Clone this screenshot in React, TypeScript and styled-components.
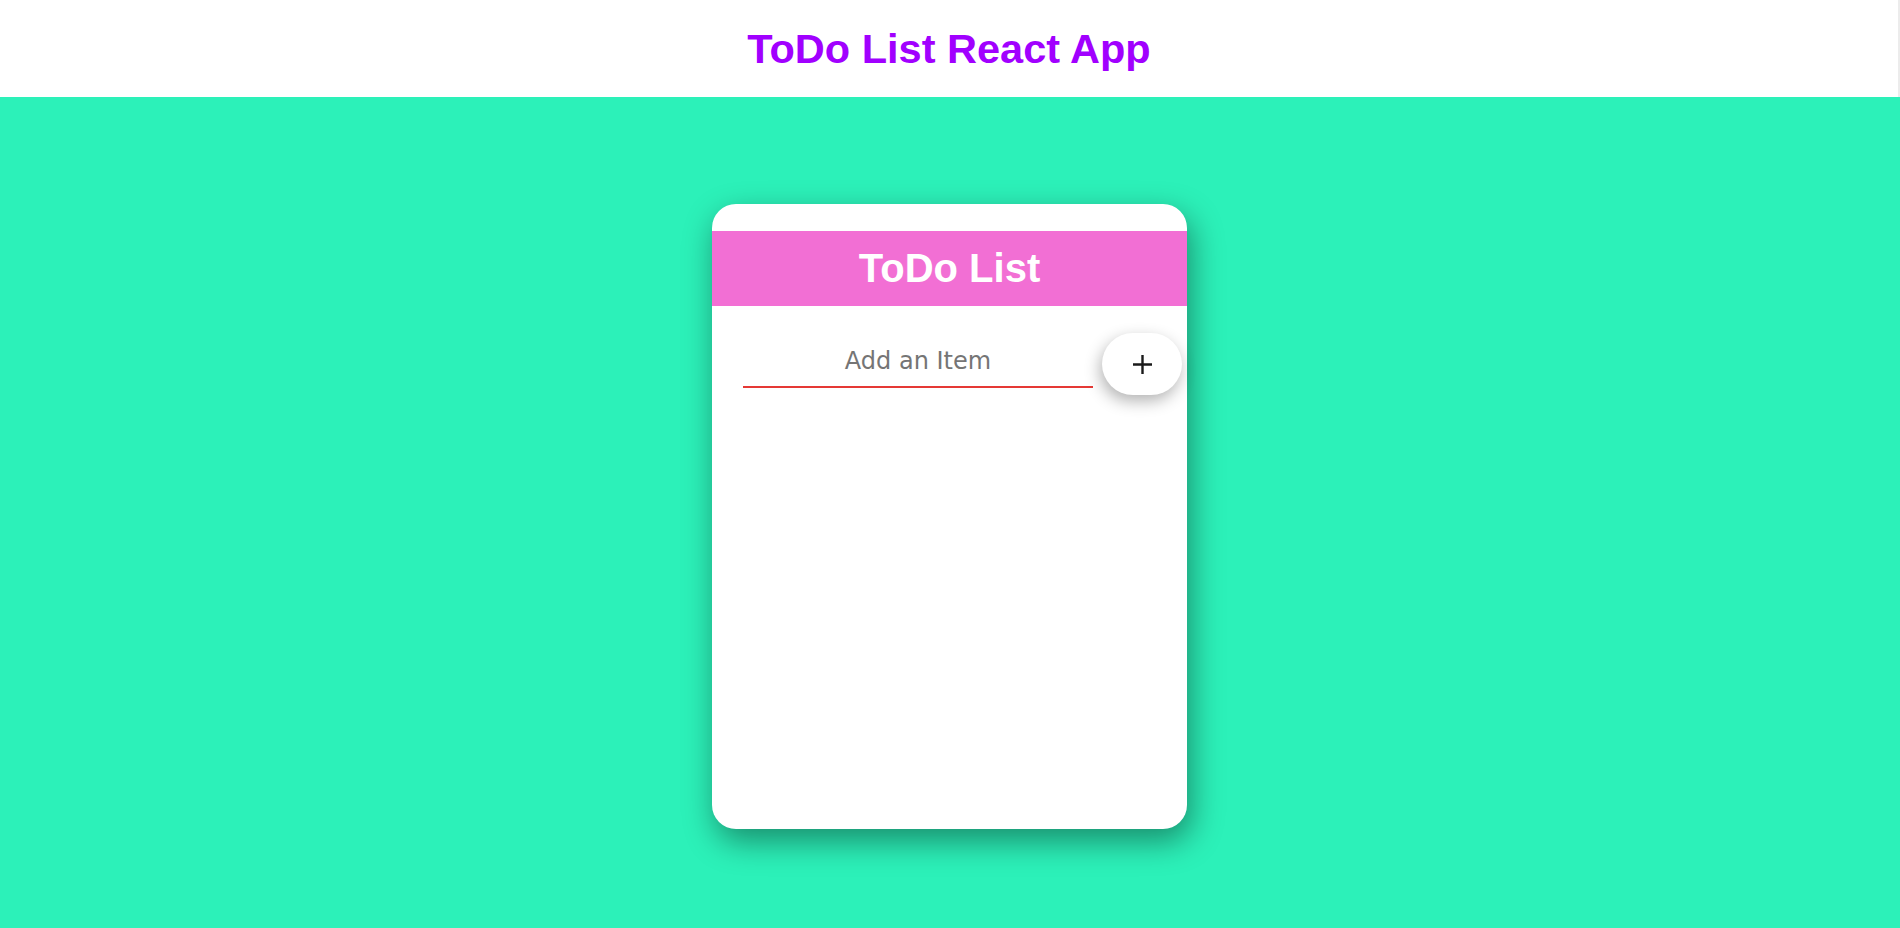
import styled, { createGlobalStyle } from "styled-components";

const GlobalStyle = createGlobalStyle`
  html, body {
    margin: 0;
    padding: 0;
  }

  body {
    background: #2cf1b9;
    font-family: "Liberation Sans", Arial, sans-serif;
    min-height: 928px;
  }
`;

const TopBar = styled.header`
  box-sizing: border-box;
  height: 97px;
  background: #ffffff;
  border-right: 2px solid #ececec;
  display: flex;
  align-items: center;
  justify-content: center;
`;

const AppTitle = styled.h1`
  margin: 0;
  padding-top: 1px;
  font-size: 41.5px;
  font-weight: bold;
  color: #a100ff;
`;

const Main = styled.main`
  display: flex;
  justify-content: center;
  padding-top: 107px;
  padding-right: 1px;
`;

const Card = styled.div`
  box-sizing: border-box;
  width: 475px;
  height: 625px;
  padding-top: 27px;
  background: #ffffff;
  border-radius: 24px;
  box-shadow: 4px 12px 32px rgba(0, 0, 0, 0.42);
`;

const CardHeading = styled.div`
  height: 75px;
  background: #f26fd4;
  display: flex;
  align-items: center;
  justify-content: center;
`;

const CardTitle = styled.h2`
  margin: 0;
  font-size: 40px;
  font-weight: bold;
  color: #ffffff;
`;

const AddRow = styled.div`
  display: flex;
  align-items: center;
  gap: 9px;
  margin-top: 27px;
  padding-left: 31px;
`;

const ItemInput = styled.input`
  box-sizing: border-box;
  width: 350px;
  height: 48px;
  padding: 0 0 4px;
  border: none;
  border-bottom: 2px solid #e53935;
  outline: none;
  background: transparent;
  text-align: center;
  font-family: "DejaVu Sans", Verdana, sans-serif;
  font-size: 24px;
  color: #333;

  &::placeholder {
    color: #757575;
  }
`;

const AddButton = styled.button`
  width: 80px;
  height: 62px;
  border: none;
  border-radius: 31px;
  background: #ffffff;
  box-shadow: -2px 6px 16px rgba(0, 0, 0, 0.3);
  display: flex;
  align-items: center;
  justify-content: center;
  cursor: pointer;
  padding: 0;
`;

const PlusIcon = () => (
  <svg width="21" height="21" viewBox="0 0 21 21">
    <path d="M10.5 1v19M1 10.5h19" stroke="#1a1a1a" strokeWidth="2.4" fill="none" />
  </svg>
);

export default function App() {
  return (
    <>
      <GlobalStyle />
      <TopBar>
        <AppTitle>ToDo List React App</AppTitle>
      </TopBar>
      <Main>
        <Card>
          <CardHeading>
            <CardTitle>ToDo List</CardTitle>
          </CardHeading>
          <AddRow>
            <ItemInput type="text" placeholder="Add an Item" />
            <AddButton>
              <PlusIcon />
            </AddButton>
          </AddRow>
        </Card>
      </Main>
    </>
  );
}
